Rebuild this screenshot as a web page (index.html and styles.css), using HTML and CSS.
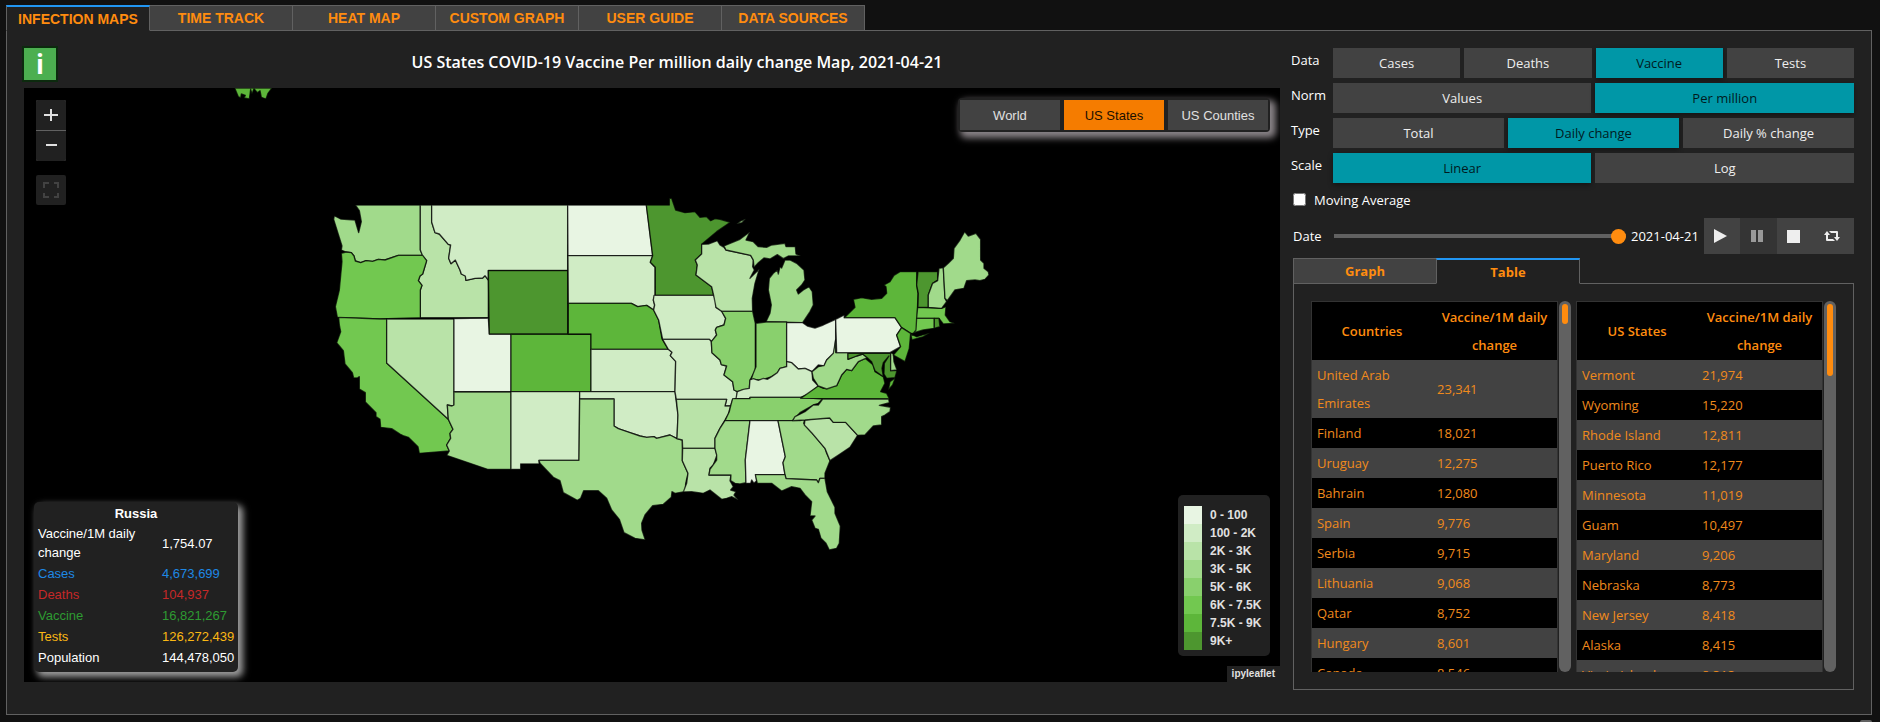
FILE: index.html
```
<!DOCTYPE html>
<html lang="en">
<head>
<meta charset="utf-8">
<title>COVID-19 Infection Maps</title>
<link rel="stylesheet" href="styles.css">
</head>
<body>
<div class="page">
  <nav class="tabs main-tabs">
    <button class="tab active">INFECTION MAPS</button>
    <button class="tab">TIME TRACK</button>
    <button class="tab">HEAT MAP</button>
    <button class="tab">CUSTOM GRAPH</button>
    <button class="tab">USER GUIDE</button>
    <button class="tab">DATA SOURCES</button>
  </nav>
  <main class="panel">
    <section class="map-column">
      <header class="map-header">
        <button class="info-button">i</button>
        <h1 class="map-title">US States COVID-19 Vaccine Per million daily change Map, 2021-04-21</h1>
      </header>
      <div class="map">
        <svg class="map-canvas" viewBox="0 0 3768 1782" role="img" aria-label="US states map">
          <g class="coast">
            <path class="c7" d="M632,0H744L732,16 726,33 712,28 708,8 700,14 690,2 684,18 680,4 676,33 660,30 664,22 652,18 650,30 643,26Z"/>
          </g>
          <g transform="translate(888 306)">
            <path class="c4" d="M106,45H301V180L308,196H235L195,210 175,208 158,214 138,212 122,218 106,213 102,198 94,188 78,186 64,180 66,168 41,88 43,77 62,87 105,90 116,128 124,95 118,62Z"/>
            <path class="c3" d="M301,45H335V96L345,128 358,132 385,163 392,165 386,205 393,221 406,210 420,240 424,252 436,258 438,271 465,265 488,264 495,257 505,270V383H301V300L306,286 295,272 300,258 308,252 320,212 308,198 301,180Z"/>
            <path class="c2" d="M335,45H743V241H505V270L495,257 488,264 465,265 438,271 436,258 424,252 420,240 406,210 393,221 386,205 392,165 385,163 358,132 345,128 335,96Z"/>
            <path class="c6" d="M64,190L78,186 94,188 102,198 106,213 122,218 138,212 158,214 175,208 195,210 235,196H308L320,212 308,252 300,258 295,272 306,286 301,300V383L180,387 52,382 46,350 58,300 66,215Z"/>
            <path class="c6" d="M56,382L180,387H200V519L385,688 399,718 390,730 392,745 380,765 388,783 298,790 294,770 265,742 252,738 240,732 215,716 182,712 180,688 168,680 168,668 136,636 136,608 118,597 118,560 112,564 101,564 97,548 75,522 70,482 50,458 62,425 58,405Z"/>
            <path class="c3" d="M200,387H402V645L396,648 382,645 385,688 200,519Z"/>
            <path class="c1" d="M402,386L505,384 508,432H573V605H402Z"/>
            <path class="c8" d="M505,242H743V432H508Z"/>
            <path class="c4" d="M402,606H573V838H503L380,796 388,783 380,765 392,745 390,730 399,718 385,688 382,645 396,648 402,645Z"/>
            <path class="c7" d="M573,433H813V605H573Z"/>
            <path class="c2" d="M573,605H779L777,811H657V822H602V838H573Z"/>
          </g>
          <g transform="translate(1548 306)">
            <path class="c1" d="M83,45H319L338,197H84Z"/>
            <path class="c2" d="M84,197H338L331,217 345,232V316L340,330 344,345 341,360 320,346 293,350 274,340H85Z"/>
            <path class="c7" d="M85,340H274L293,350 320,346 341,360 356,390 366,447 385,478H153V432H85Z"/>
            <path class="c2" d="M153,478H385L396,487 391,497 407,514 405,605H153Z"/>
            <path class="c2" d="M119,605H405L414,675 411,746 390,735 350,745 342,740 320,742 300,738 270,728 235,716 222,708V627H119Z"/>
            <path class="c4" d="M119,627H222V708L235,716 270,728 300,738 320,742 342,740 350,745 390,735 411,746 427,750V812L444,850 437,880 436,903 430,906 405,910 396,905 394,922 370,943 338,947 315,975 305,1000 306,1020 316,1050 285,1045 252,1028 238,988 215,960 200,925 175,902H131L122,925 112,931 70,908 60,872 40,862 0,820 -3,811H117Z"/>
            <path class="c8" d="M319,45H388V25H395L407,60 435,68 465,65 480,82 500,80 512,92 525,86 540,88 571,97 530,125 485,163V192L466,210 472,225 468,255 515,290 521,316H346V232L331,217 338,197Z"/>
            <path class="c2" d="M342,316H521L527,330 528,352 545,362 557,385 552,405 530,412 526,420 530,435 515,455 508,448H368L356,390 341,360 344,345 340,330Z"/>
            <path class="c2" d="M368,448H508L514,455 516,488 540,510 544,524 560,528 552,555 578,575 582,600 592,605 590,625 578,628 572,648 555,648 560,628H409L405,605 407,514 391,497 396,487 385,478Z"/>
            <path class="c3" d="M409,628H560L555,648H572L565,672 555,690 540,715 525,745V775H428L427,750 411,746 414,675Z"/>
            <path class="c3" d="M428,775H525L531,795 520,825 510,835 507,855H573L570,872 580,890 572,900 588,905 582,915 595,930 575,920 560,925 545,928 510,900 490,910 455,905 430,906 440,880 444,850 427,812Z"/>
            <path class="c3" d="M485,163L505,162 532,152 540,165 552,172 558,180 632,196 640,210 638,230 643,240 630,265 658,237 645,280 637,325 638,364H545L528,352 521,316 515,290 468,255 472,225 466,210 485,192Z"/>
            <path class="c5" d="M545,364H638L646,400V540L640,552 630,570 628,595 610,600 592,605 582,600 578,575 552,555 560,528 544,524 540,510 516,488 514,455 530,435 526,420 530,412 552,405 557,385Z"/>
            <path class="c4" d="M590,102L600,94 617,86 606,98Z"/>
          </g>
          <g transform="translate(1998 306)">
            <path class="c4" d="M102,168L150,148 180,125 168,150 190,155 205,170 230,172 245,165 285,160 288,170 316,170 318,192 332,198 295,198 280,206 262,194 240,207 222,204 205,218 192,232 190,210 182,196 108,180Z"/>
            <path class="c4" d="M228,395L240,370 244,345 235,300 238,265 250,250 262,240 265,252 270,230 275,234 285,210 300,210 320,220 342,240 345,270 335,285 320,300 325,312 340,300 357,290 367,305 370,345 360,365 338,398Z"/>
            <path class="c5" d="M198,400L228,396H290V530L270,535 262,550 245,560 220,568 205,570 190,568 182,572 190,550 198,530Z"/>
            <path class="c1" d="M290,398H338L352,408 375,414 400,405 437,388V448L432,490 410,510 402,528 385,525 366,545 345,535 325,537 305,518 290,515Z"/>
            <path class="c2" d="M142,605L160,598 178,595 180,570 190,566 205,571 220,565 232,568 245,560 262,548 270,535 290,530V515L305,518 325,537 345,535 366,545 368,570 385,588 355,612 332,622H180V626H138Z"/>
            <path class="c5" d="M128,626H180V622H332L398,627 385,640 370,645 330,668 308,692H105L118,665 122,648Z"/>
            <path class="c4" d="M105,692H180L166,810 168,878 150,882 135,880 122,872 123,855H57L60,838 80,810 80,795 75,775V745L90,715Z"/>
            <path class="c1" d="M180,692H264L286,800 279,818 285,854H197L200,872 192,880 185,870 182,880 168,880 166,810Z"/>
            <path class="c4" d="M264,692H330L344,688 341,700 365,728 405,775 410,790 420,812 405,850V865L390,865 385,880 380,870 288,866 285,854 279,818 286,800Z"/>
          </g>
          <g transform="translate(2178 846)">
            <path class="c3" d="M165,150L200,146 239,144 250,157H287L323,196 300,232 270,252 240,272 225,235 185,188 163,165Z"/>
            <path class="c4" d="M218,87H416L418,98 388,106 422,112 420,125 405,135 395,140V165L370,168 345,195 323,196 287,157H250L239,144 165,150 128,152 135,140 165,125 190,105 205,105Z"/>
            <path class="c4" d="M16,314H105L108,326 200,330 205,338 210,325 225,325 232,365 255,412V430L271,468 268,520 260,535 238,540 228,520 213,505 205,478 195,475 185,450 195,438 180,438 185,395 165,375 150,355 125,350 95,363 65,340 22,340Z"/>
          </g>
          <g transform="translate(2298 396)">
            <path class="c7" d="M32,535L85,498 100,505 140,497 155,465 170,448 185,452 205,425 225,415 250,435 255,455 280,470 285,490 272,515 290,520 298,536Z"/>
            <path class="c7" d="M295,510L300,485 316,473 308,495Z"/>
            <path class="c4" d="M66,455L85,440 102,437 110,420 130,400 137,360V398H174V418L200,408 218,402 232,413 205,425 185,452 170,448 155,465 140,497 110,507 85,498 70,475Z"/>
            <path class="c8" d="M174,400H302V452H321L315,473 290,475 282,462 283,430 297,408 280,428 276,445 280,470 255,452 245,425 232,413 218,402 200,408 174,418Z"/>
            <path class="c4" d="M302,398L310,402 312,425 321,450 302,452Z"/>
            <path class="c1" d="M137,298L163,285V293H315L335,323 320,345 332,380 300,398H140Z"/>
            <path class="c7" d="M163,293L195,262 190,238 215,233 245,238 275,235 290,220 288,200 282,195 300,185 312,166 330,155H380V195L384,220 380,335 370,340 362,340 335,323 315,293Z"/>
            <path class="c7" d="M362,342L380,350 420,338 400,350 366,360Z"/>
            <path class="c7" d="M335,323L362,340 358,385 345,425 310,405 332,380 320,345Z"/>
            <path class="c6" d="M383,262L455,265 468,260 466,285 480,305 495,310 460,312 447,295H380Z"/>
            <path class="c6" d="M380,295H433V325L400,330 372,338 378,330Z"/>
            <path class="c8" d="M433,295H447L450,320 433,325Z"/>
            <path class="c8" d="M384,155H443V180L428,190 415,225V262H384L385,220 380,195Z"/>
            <path class="c4" d="M447,145L460,143 465,235 470,245 455,265 415,262V225L428,190 443,182Z"/>
            <path class="c4" d="M460,143L475,130 490,115 492,85 510,60 524,35 535,48 558,40 572,58V120L582,130V145L595,155 597,165 585,178 570,182 555,180 530,182 522,205 495,210 472,242 465,235Z"/>
          </g>
        </svg>

        <div class="map-tools">
          <div class="tool-group">
            <button class="tool" aria-label="Zoom in"><svg viewBox="0 0 30 30"><path d="M8 15H22M15 9V21"/></svg></button>
            <button class="tool" aria-label="Zoom out"><svg viewBox="0 0 30 30"><path d="M10 14H21"/></svg></button>
          </div>
          <button class="tool fullscreen" aria-label="Full screen"><svg viewBox="0 0 30 30"><path d="M8 13V8H13M18 8H22V13M22 18V22H18M13 22H8V18"/></svg></button>
        </div>

        <div class="region-switch">
          <button class="region">World</button>
          <button class="region chosen">US States</button>
          <button class="region">US Counties</button>
        </div>

        <div class="country-card">
          <table class="country-table">
            <caption>Russia</caption>
            <tr class="plain"><td>Vaccine/1M daily change</td><td>1,754.07</td></tr>
            <tr class="cases"><td>Cases</td><td>4,673,699</td></tr>
            <tr class="deaths"><td>Deaths</td><td>104,937</td></tr>
            <tr class="vaccine"><td>Vaccine</td><td>16,821,267</td></tr>
            <tr class="tests"><td>Tests</td><td>126,272,439</td></tr>
            <tr class="plain"><td>Population</td><td>144,478,050</td></tr>
          </table>
        </div>

        <ul class="legend">
          <li><span class="swatch s1"></span>0 - 100</li>
          <li><span class="swatch s2"></span>100 - 2K</li>
          <li><span class="swatch s3"></span>2K - 3K</li>
          <li><span class="swatch s4"></span>3K - 5K</li>
          <li><span class="swatch s5"></span>5K - 6K</li>
          <li><span class="swatch s6"></span>6K - 7.5K</li>
          <li><span class="swatch s7"></span>7.5K - 9K</li>
          <li><span class="swatch s8"></span>9K+</li>
        </ul>
        <div class="attribution">ipyleaflet</div>
      </div>
    </section>

    <section class="side-column">
      <div class="options">
        <div class="option-row"><span class="option-label">Data</span>
          <div class="choices"><button class="choice">Cases</button><button class="choice">Deaths</button><button class="choice chosen">Vaccine</button><button class="choice">Tests</button></div></div>
        <div class="option-row"><span class="option-label">Norm</span>
          <div class="choices"><button class="choice">Values</button><button class="choice chosen">Per million</button></div></div>
        <div class="option-row"><span class="option-label">Type</span>
          <div class="choices"><button class="choice">Total</button><button class="choice chosen">Daily change</button><button class="choice">Daily % change</button></div></div>
        <div class="option-row"><span class="option-label">Scale</span>
          <div class="choices"><button class="choice chosen">Linear</button><button class="choice">Log</button></div></div>
      </div>

      <label class="average"><input type="checkbox">Moving Average</label>

      <div class="date-row">
        <label class="date-label" for="date">Date</label>
        <input class="date-slider" id="date" type="range" min="0" max="100" value="100">
        <output class="date-value" for="date">2021-04-21</output>
        <div class="player">
          <button aria-label="Play"><svg viewBox="0 0 16 16"><path d="M2 1L15 8 2 15Z"/></svg></button>
          <button class="off" aria-label="Pause"><svg viewBox="0 0 16 16"><path d="M2 2H7V14H2ZM9 2H14V14H9Z"/></svg></button>
          <button aria-label="Stop"><svg viewBox="0 0 16 16"><path d="M1 2H14V15H1Z"/></svg></button>
          <button aria-label="Repeat"><svg viewBox="0 0 16 16"><path d="M0 7L3 3 6 7H4V11H9L11 13H3Q2 13 2 12V7ZM16 9L13 13 10 9H12V5H7L5 3H13Q14 3 14 4V9Z"/></svg></button>
        </div>
      </div>

      <div class="results">
        <nav class="tabs side-tabs">
          <button class="tab">Graph</button>
          <button class="tab active">Table</button>
        </nav>
        <div class="results-panel">
          <div class="scroller">
            <div class="scroll-view">
              <table class="ranking">
                <thead><tr><th>Countries</th><th>Vaccine/1M daily change</th></tr></thead>
                <tbody>
                <tr><td>United Arab Emirates</td><td>23,341</td></tr>
                <tr><td>Finland</td><td>18,021</td></tr>
                <tr><td>Uruguay</td><td>12,275</td></tr>
                <tr><td>Bahrain</td><td>12,080</td></tr>
                <tr><td>Spain</td><td>9,776</td></tr>
                <tr><td>Serbia</td><td>9,715</td></tr>
                <tr><td>Lithuania</td><td>9,068</td></tr>
                <tr><td>Qatar</td><td>8,752</td></tr>
                <tr><td>Hungary</td><td>8,601</td></tr>
                <tr><td>Canada</td><td>8,546</td></tr>
                </tbody>
              </table>
            </div>
            <div class="scroll-track"><div class="scroll-thumb short"></div></div>
          </div>
          <div class="scroller">
            <div class="scroll-view">
              <table class="ranking">
                <thead><tr><th>US States</th><th>Vaccine/1M daily change</th></tr></thead>
                <tbody>
                <tr><td>Vermont</td><td>21,974</td></tr>
                <tr><td>Wyoming</td><td>15,220</td></tr>
                <tr><td>Rhode Island</td><td>12,811</td></tr>
                <tr><td>Puerto Rico</td><td>12,177</td></tr>
                <tr><td>Minnesota</td><td>11,019</td></tr>
                <tr><td>Guam</td><td>10,497</td></tr>
                <tr><td>Maryland</td><td>9,206</td></tr>
                <tr><td>Nebraska</td><td>8,773</td></tr>
                <tr><td>New Jersey</td><td>8,418</td></tr>
                <tr><td>Alaska</td><td>8,415</td></tr>
                <tr><td>Virgin Islands</td><td>8,313</td></tr>
                </tbody>
              </table>
            </div>
            <div class="scroll-track"><div class="scroll-thumb long"></div></div>
          </div>
        </div>
      </div>
    </section>
  </main>
  <div class="below-fold"><span class="page-scroll"></span></div>
</div>
</body>
</html>
```
FILE: styles.css
```
* { box-sizing: border-box; }
body {
  margin: 0;
  background: #111;
  color: #fff;
  font-family: "Open Sans", "Noto Sans", sans-serif;
  font-size: 13px;
}
button { border: 0; margin: 0; padding: 0; font: inherit; color: inherit; }
.page {
  height: 100vh;
  min-height: 640px;
  display: flex;
  flex-direction: column;
  padding: 5px 8px 0 6px;
  overflow: hidden;
}

/* Tab bars */
.tabs { display: flex; position: relative; }
.tab {
  width: 144px;
  height: 26px;
  margin-right: -1px;
  margin-bottom: -1px;
  background: #424242;
  border: 1px solid #616161;
  color: #ff8c0f;
  font-weight: 700;
  font-size: 14px;
  line-height: 20px;
}
.main-tabs .tab { font-family: "Liberation Sans", Arial, sans-serif; }
.side-tabs .tab { font-size: 13px; }
.tab.active {
  background: #212121;
  border-top: 2px solid #2196f3;
  border-bottom-color: #212121;
  z-index: 1;
}

.panel {
  flex: 1;
  min-height: 0;
  display: grid;
  grid-template-columns: 29fr 13fr;
  grid-template-rows: minmax(0, 1fr);
  gap: 11px;
  padding: 15px 17px 0;
  background: #212121;
  border: 1px solid #616161;
}
.below-fold { height: 7px; display: flex; justify-content: flex-end; align-items: flex-end; }
.page-scroll { width: 12px; height: 2px; border-radius: 6px 6px 0 0; background: #616161; }

/* Map column */
.map-column { display: flex; flex-direction: column; min-width: 0; min-height: 0; padding-bottom: 32px; }
.map-header { display: flex; align-items: flex-start; height: 42px; }
.info-button {
  flex: none;
  width: 36px;
  height: 36px;
  margin-left: -2px;
  border: 2px solid #0c2a0e;
  background: #4caf50;
  font-size: 26px;
  font-weight: 700;
  line-height: 30px;
}
.map-title {
  flex: 1;
  margin: 0;
  padding-left: 16px;
  text-align: center;
  font-size: 16px;
  font-weight: 600;
  line-height: 32px;
}
.map {
  position: relative;
  flex: 1;
  min-height: 0;
  background: #000;
  overflow: hidden;
  font-family: "Liberation Sans", Arial, sans-serif;
}
.map-canvas { position: absolute; inset: 0; width: 100%; height: 100%; }
.map-canvas path { stroke: #000; stroke-opacity: 0.7; stroke-width: 4; stroke-linejoin: round; }
.c1 { fill: #e8f5e3; }
.c2 { fill: #d0ecc5; }
.c3 { fill: #b9e3a8; }
.c4 { fill: #a1da8b; }
.c5 { fill: #89d06d; }
.c6 { fill: #72c850; }
.c7 { fill: #5db63a; }
.c8 { fill: #4d962f; }

.map-tools { position: absolute; left: 12px; top: 12px; display: grid; gap: 14px; }
.tool-group { display: grid; gap: 1px; background: #616161; border-radius: 2px; overflow: hidden; }
.tool { display: block; width: 30px; height: 30px; background: #212121; }
.tool svg { display: block; width: 30px; height: 30px; fill: none; stroke: #e0e0e0; stroke-width: 2; }
.fullscreen { border-radius: 2px; }
.fullscreen svg { stroke: #424242; }

.region-switch {
  position: absolute;
  right: 10px;
  top: 10px;
  display: flex;
  gap: 4px;
  padding: 2px;
  background: #212121;
  border-radius: 4px;
  box-shadow: 4px 4px 7px 2px #8a8488;
}
.region { width: 100px; height: 30px; background: #424242; color: #e0e0e0; }
.region.chosen { background: #f57c00; color: #1a1000; }

.country-card {
  position: absolute;
  left: 10px;
  bottom: 10px;
  width: 204px;
  height: 170px;
  padding: 2px 0 0;
  background: #212121;
  border-radius: 5px;
  box-shadow: 4px 4px 7px 1px #9e9e9e;
}
.country-table { width: 100%; border-collapse: collapse; table-layout: fixed; line-height: 19px; }
.country-table caption { font-weight: 700; }
.country-table td { padding: 1px 0 1px 4px; }
.country-table td:first-child { width: 124px; padding-right: 20px; }
.plain { color: #fff; }
.cases { color: #1e88e5; }
.deaths { color: #c62828; }
.vaccine { color: #2e9b32; }
.tests { color: #fbb814; }

.legend {
  position: absolute;
  right: 10px;
  bottom: 26px;
  width: 92px;
  margin: 0;
  padding: 11px 6px 6px;
  list-style: none;
  background: #212121;
  border-radius: 5px;
  color: #e0e0e0;
  font-size: 12px;
  font-weight: 700;
  line-height: 18px;
}
.legend li { display: flex; gap: 8px; white-space: nowrap; }
.swatch { width: 18px; height: 18px; }
.s1 { background: #e8f5e3; }
.s2 { background: #d0ecc5; }
.s3 { background: #b9e3a8; }
.s4 { background: #a1da8b; }
.s5 { background: #89d06d; }
.s6 { background: #72c850; }
.s7 { background: #5db63a; }
.s8 { background: #4d962f; }
.attribution {
  position: absolute;
  right: 0;
  bottom: 0;
  padding: 0 5px;
  background: #212121;
  color: #e0e0e0;
  font-size: 10px;
  font-weight: 700;
  line-height: 16px;
}

/* Side column */
.side-column { display: flex; flex-direction: column; min-width: 0; min-height: 0; padding: 2px 0 24px; }
.options { display: grid; gap: 5px; }
.option-row { display: grid; grid-template-columns: 42px 1fr; }
.option-label { line-height: 24px; }
.choices { display: flex; gap: 4px; }
.choice { flex: 1 1 0; height: 30px; background: #424242; color: #eee; }
.choice.chosen { background: #0097a7; color: #001a1e; box-shadow: 0 2px 5px rgba(0, 0, 0, 0.4); }

.average { display: flex; align-items: center; gap: 8px; height: 20px; margin: 7px 0 0 2px; }
.average input { width: 13px; height: 13px; margin: 0 0 2px; }

.date-row { display: flex; align-items: center; height: 36px; margin: 8px 0 0 2px; }
.date-label { width: 41px; }
.date-slider {
  flex: 1;
  min-width: 0;
  height: 16px;
  margin: 0 5px 0 0;
  appearance: none;
  background: linear-gradient(#616161, #616161) center / 100% 4px no-repeat;
}
.date-slider::-webkit-slider-thumb {
  appearance: none;
  width: 15px;
  height: 15px;
  border-radius: 50%;
  background: #ff8c0f;
}
.date-value { width: 73px; white-space: nowrap; }
.player { display: grid; grid-template-columns: 36px 37px 37px 1fr; width: 150px; height: 36px; }
.player button { display: grid; place-items: center; padding-right: 4px; background: #424242; }
.player .off { background: #343434; }
.player svg { width: 16px; height: 16px; fill: #eee; }
.player .off svg { fill: #999; }

.results { flex: 1; min-height: 0; display: flex; flex-direction: column; margin: 4px 0 0 2px; }
.results-panel {
  flex: 1;
  min-height: 0;
  display: grid;
  grid-template-columns: 1fr 1fr;
  grid-template-rows: minmax(0, 1fr);
  gap: 5px;
  padding: 17px;
  border: 1px solid #616161;
}
.scroller { display: flex; gap: 1px; min-width: 0; min-height: 0; }
.scroll-view { flex: 1; min-width: 0; overflow: hidden; border: 1px solid #333; border-bottom: 0; }
.scroll-track { width: 12px; padding: 3px; border-radius: 6px; background: #616161; }
.scroll-thumb { border-radius: 3px; background: #ff8c0f; }
.scroll-thumb.short { height: 20px; }
.scroll-thumb.long { height: 72px; }

.ranking {
  width: 100%;
  table-layout: fixed;
  border-collapse: collapse;
  background: #000;
  color: #f08a1c;
  line-height: 28px;
}
.ranking th { padding: 1px 6px; color: #ff8c0f; font-weight: 600; }
.ranking th:first-child { width: 49%; }
.ranking td { padding: 1px 5px; }
.ranking td:first-child { padding-right: 20px; }
.ranking tbody tr:nth-child(odd) { background: #424242; }
```
